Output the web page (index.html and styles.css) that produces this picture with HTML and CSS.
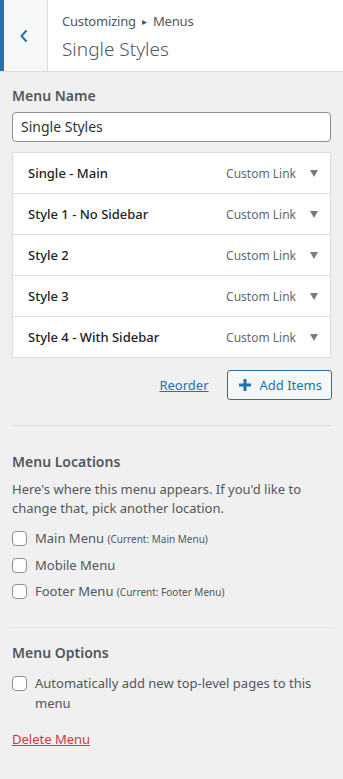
FILE: index.html
```html
<!DOCTYPE html>
<html>
<head>
<meta charset="utf-8">
<link rel="stylesheet" href="styles.css">
</head>
<body>
<div class="header">
  <div class="back">
    <svg width="12" height="14" viewBox="0 0 12 14"><path d="M8.5 1.5 L3.5 7 L8.5 12.5" fill="none" stroke="#2271b1" stroke-width="2"/></svg>
  </div>
  <div class="titles">
    <div class="crumb">Customizing <span class="tri">&#9656;</span> Menus</div>
    <div class="title">Single Styles</div>
  </div>
</div>
<div class="content">
  <div class="label">Menu Name</div>
  <div class="input">Single Styles</div>
  <ul class="items">
    <li class="item"><span class="name">Single - Main</span><span class="type">Custom Link</span><span class="arrow"></span></li>
    <li class="item"><span class="name">Style 1 - No Sidebar</span><span class="type">Custom Link</span><span class="arrow"></span></li>
    <li class="item"><span class="name">Style 2</span><span class="type">Custom Link</span><span class="arrow"></span></li>
    <li class="item"><span class="name">Style 3</span><span class="type">Custom Link</span><span class="arrow"></span></li>
    <li class="item"><span class="name">Style 4 - With Sidebar</span><span class="type">Custom Link</span><span class="arrow"></span></li>
  </ul>
  <div class="actions">
    <a class="reorder">Reorder</a>
    <div class="add"><svg width="14" height="14" viewBox="0 0 14 14"><path d="M7 1v12M1 7h12" stroke="#2271b1" stroke-width="3"/></svg><span>Add Items</span></div>
  </div>
  <div class="sep"></div>
  <div class="label loc">Menu Locations</div>
  <p class="desc">Here's where this menu appears. If you'd like to change that, pick another location.</p>
  <div class="check"><span class="box"></span><span>Main Menu <small>(Current: Main Menu)</small></span></div>
  <div class="check"><span class="box"></span><span>Mobile Menu</span></div>
  <div class="check"><span class="box"></span><span>Footer Menu <small>(Current: Footer Menu)</small></span></div>
  <div class="sep dotted"></div>
  <div class="label opt">Menu Options</div>
  <div class="check wrap"><span class="box"></span><span>Automatically add new top-level pages to this menu</span></div>
  <a class="delete">Delete Menu</a>
</div>
</body>
</html>
```
FILE: styles.css
```css
* { box-sizing: border-box; }
html, body { margin: 0; padding: 0; }
body {
  background: #f0f0f1;
  font-family: "Noto Sans", "Open Sans", sans-serif;
  font-size: 13px;
  color: #50575e;
  width: 343px;
  height: 779px;
  overflow: hidden;
}
.header {
  display: flex;
  height: 72px;
  background: #fff;
  border-bottom: 1px solid #dcdcde;
}
.back {
  width: 48px;
  background: #f6f7f7;
  border-left: 4px solid #2271b1;
  border-right: 1px solid #dcdcde;
  display: flex;
  align-items: center;
  justify-content: center;
  padding-right: 4px;
}
.titles { padding: 11px 0 0 14px; }
.crumb { font-size: 13px; line-height: 20px; color: #50575e; letter-spacing: -0.2px; }
.tri { font-size: 10px; margin: 0 3px; position: relative; top: -1px; }
.title { font-size: 19px; line-height: 28px; font-weight: 300; color: #50575e; margin-top: 3px; }
.content { padding: 14px 12px 0; }
.label { font-size: 14px; font-weight: 600; line-height: 20px; color: #50575e; }
.input {
  margin-top: 6px;
  height: 30px;
  border: 1px solid #8c8f94;
  border-radius: 4px;
  background: #fff;
  padding: 0 8px;
  line-height: 28px;
  font-size: 14px;
  color: #2c3338;
}
.items {
  list-style: none;
  margin: 10px 0 0;
  padding: 0;
  border: 1px solid #dcdcde;
  background: #fff;
}
.item {
  display: flex;
  align-items: center;
  height: 41px;
  padding: 0 10px 0 15px;
  border-top: 1px solid #dcdcde;
}
.item:first-child { border-top: none; height: 40px; }
.name { flex: 1; font-weight: 500; color: #1d2327; font-size: 13px; }
.type { color: #646970; font-size: 12px; margin-right: 14px; }
.arrow {
  width: 0; height: 0;
  border-left: 4px solid transparent;
  border-right: 4px solid transparent;
  border-top: 7px solid #787c82;
  margin-right: 2px;
}
.actions {
  display: flex;
  justify-content: flex-end;
  align-items: center;
  margin-top: 12px;
  margin-right: -1px;
  height: 30px;
}
.reorder { color: #2271b1; text-decoration: underline; margin-right: 18px; font-size: 13px; }
.add {
  display: flex;
  align-items: center;
  height: 30px;
  padding: 0 9px 0 10px;
  border: 1px solid #2271b1;
  border-radius: 3px;
  background: #f6f7f7;
  color: #2271b1;
  font-size: 13px;
}
.add svg { margin-right: 8px; }
.sep { margin-top: 25px; border-top: 1px solid #dcdcde; }
.sep.dotted { border-top: 1px dotted #dcdcde; margin-top: 25px; }
.loc { margin-top: 26px; }
.desc { margin: 8px 0 10px; line-height: 19px; color: #50575e; }
.check { display: flex; align-items: flex-start; line-height: 20px; margin-bottom: 6px; }
.box {
  flex: none;
  width: 15px; height: 15px;
  border: 1px solid #8c8f94;
  border-radius: 4px;
  background: #fff;
  margin: 3px 8px 0 0;
}
.check small { font-size: 10px; }
.opt { margin-top: 15px; margin-bottom: 10px; }
.delete { display: block; margin-top: 17px; color: #d63638; text-decoration: underline; }
```
